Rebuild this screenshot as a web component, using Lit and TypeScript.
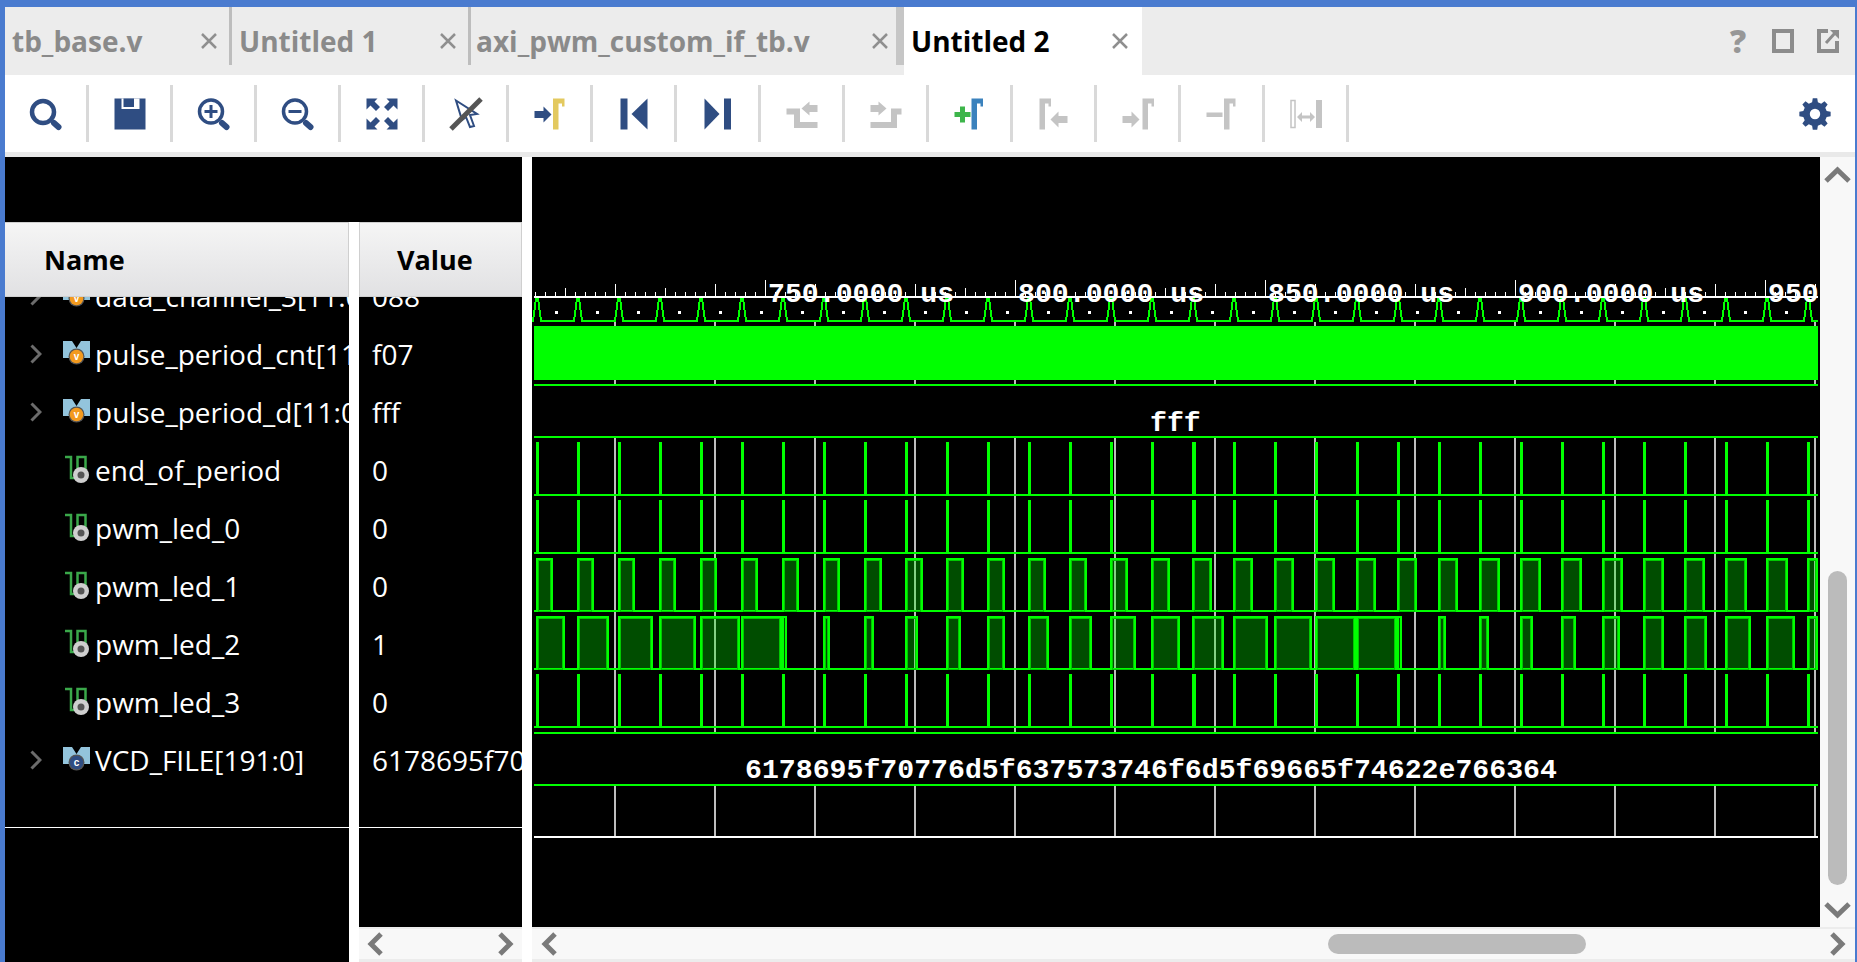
import { LitElement, html, css, svg } from "lit";
import { customElement } from "lit/decorators.js";

const NAVY = "#2f4d82";
const GRAY = "#c4c4c4";

const gamma = (x: number, c: string) =>
  svg`<path fill=${c} d="M${x},-15.5h11.5v8h-2.5v-3h-3.5v26h-5.5z"/>`;
const arrowR = (x: number, y: number, c: string) =>
  svg`<path fill=${c} d="M${x},${y - 3.5}h9v-4.5l8,8l-8,8v-4.5h-9z"/>`;
const arrowL = (x: number, y: number, c: string) =>
  svg`<path fill=${c} d="M${x},${y - 3.5}h-9v-4.5l-8,8l8,8v-4.5h9z"/>`;
const lens = (cx: number, cy: number, r: number, w: number, inner: unknown = null) => svg`
  <circle cx=${cx} cy=${cy} r=${r} fill="none" stroke=${NAVY} stroke-width=${w}/>
  ${inner}
  <path d="M8,9L12.5,13" stroke=${NAVY} stroke-width="6" stroke-linecap="round"/>`;
const corner = svg`<path fill=${NAVY} d="M-15.5,-15.5h11l-3,3l5.500,5.500l-4,4l-5.500,-5.500l-4,4z"/>`;

function gearPath(): string {
  const pts: string[] = [];
  const n = 8;
  for (let i = 0; i < n; i++) {
    const a = (i / n) * Math.PI * 2 - Math.PI / 2;
    const s = Math.PI / n;
    const p = (r: number, t: number) =>
      `${(r * Math.cos(t)).toFixed(2)},${(r * Math.sin(t)).toFixed(2)}`;
    pts.push(p(12, a - s * 0.62), p(15.8, a - s * 0.36), p(15.8, a + s * 0.36), p(12, a + s * 0.62));
  }
  return `M${pts.join("L")}Z M5.2,0A5.2,5.2 0 1 0 -5.2,0A5.2,5.2 0 1 0 5.2,0Z`;
}

const ICONS = [
  lens(-3, -2, 11, 4.5),
  svg`<rect x="-15.5" y="-15.5" width="31" height="31" fill=${NAVY}/>
      <rect x="-8.5" y="-15.5" width="18" height="10.500" fill="#fff"/>
      <rect x="-6.5" y="-15.5" width="10.500" height="8.500" fill=${NAVY}/>`,
  lens(-3, -2.5, 11.5, 3.5, svg`<path d="M-9.500,-2.500h13M-3,-9v13" stroke=${NAVY} stroke-width="3" fill="none"/>`),
  lens(-3, -2.5, 11.5, 3.5, svg`<path d="M-9.500,-2.500h13" stroke=${NAVY} stroke-width="3" fill="none"/>`),
  svg`${corner}<g transform="scale(-1,1)">${corner}</g><g transform="scale(1,-1)">${corner}</g><g transform="scale(-1,-1)">${corner}</g>`,
  svg`<path d="M-10,-13.500L11,0L4,1L8,12L4,13L0,3L-4,6Z" fill="#fff" stroke=${NAVY} stroke-width="2"/>
      <path d="M15,-15L-15,15" stroke="#555" stroke-width="5"/>`,
  svg`${arrowR(-15.5, 0.5, NAVY)}${gamma(3, "#e3c95f")}`,
  svg`<rect x="-13.5" y="-15.5" width="7" height="31" fill=${NAVY}/><path fill=${NAVY} d="M13.5,-15.5L-2.500,0L13.5,15.5Z"/>`,
  svg`<path fill=${NAVY} d="M-13.5,-15.5L1.500,0L-13.5,15.5Z"/><rect x="6" y="-15.5" width="7" height="31" fill=${NAVY}/>`,
  svg`<path d="M-15.5,-2.500H-5V11H15.5" fill="none" stroke=${GRAY} stroke-width="6"/>
      <path fill=${GRAY} d="M15.5,-9h-8v-3.500l-8,7l8,7v-3.500h8z"/>`,
  svg`<path d="M-15.5,11H8V-2.500H15.5" fill="none" stroke=${GRAY} stroke-width="6"/>
      <path fill=${GRAY} d="M-15.5,-9h8v-3.500l8,7l-8,7v-3.500h-8z"/>`,
  svg`<path d="M-15.5,0.500h16M-7.500,-7.500v16" stroke="#3db54a" stroke-width="5" fill="none"/>${gamma(1.5, "#3b82bd")}`,
  svg`${gamma(-14.5, GRAY)}${arrowL(13.5, 5.5, GRAY)}`,
  svg`${arrowR(-15.5, 5.5, GRAY)}${gamma(4.5, GRAY)}`,
  svg`<rect x="-15.5" y="-1.500" width="16" height="4.500" fill=${GRAY}/>${gamma(2, GRAY)}`,
  svg`<rect x="-15" y="-13.5" width="4" height="27" fill="none" stroke=${GRAY} stroke-width="1.500"/>
      <rect x="10" y="-14" width="6" height="28" fill=${GRAY}/>
      <path fill=${GRAY} d="M-9,3l5,-5v3.500h8v-3.500l5,5l-5,5v-3.500h-8v3.500z"/>`,
];

const chevron = html`<svg class="chev" viewBox="0 0 12 20"><path d="M1.500,1.500L10,10L1.500,18.500" fill="none" stroke="#6c6c6c" stroke-width="3"/></svg>`;
const busIcon = (fill: string, letter: string) => html`<svg class="ic" viewBox="0 0 27 24">
  <path fill="#93c4dc" d="M0,0H9L13.500,7L18,0H27V17H0Z"/>
  <circle cx="13.500" cy="15.500" r="8" fill="#555"/>
  <circle cx="13.500" cy="15.500" r="6.800" fill=${fill}/>
  <text class="ltr" x="13.500" y="19" text-anchor="middle">${letter}</text>
</svg>`;
const wireIcon = html`<svg class="ic wire" viewBox="0 0 27 28">
  <path d="M2,2H8V23H14.500V2H22.500V15" fill="none" stroke="#3aa84a" stroke-width="2.500"/>
  <circle cx="18" cy="20" r="8" fill="#cfcfcf"/>
  <circle cx="18" cy="20" r="3.500" fill="#555"/>
</svg>`;

type Row = { name: string; value: string; icon: unknown; exp: boolean };
const bus = busIcon("#f39a1e", "v");
const ROWS: Row[] = [
  { name: "data_channel_3[11:0]", value: "088", icon: bus, exp: true },
  { name: "pulse_period_cnt[11:0]", value: "f07", icon: bus, exp: true },
  { name: "pulse_period_d[11:0]", value: "fff", icon: bus, exp: true },
  { name: "end_of_period", value: "0", icon: wireIcon, exp: false },
  { name: "pwm_led_0", value: "0", icon: wireIcon, exp: false },
  { name: "pwm_led_1", value: "0", icon: wireIcon, exp: false },
  { name: "pwm_led_2", value: "1", icon: wireIcon, exp: false },
  { name: "pwm_led_3", value: "0", icon: wireIcon, exp: false },
  { name: "VCD_FILE[191:0]", value: "6178695f70776d5f637573746f6d5f69665f74622e766364", icon: busIcon("#2f4d82", "c"), exp: true },
];

const GREEN = "#00ff00";
const L = 534, R = 1818, N = 32, P = 41;
const LED1 = [17,17,17,17,17,17,17,17,18,18,18,18,18,18,18,19,20,20,20,20,20,20,20,21,21,21,21,21,21,22,22,22];
const LED2 = [29,32,35,37,40,41,5,7,10,13,15,18,21,23,26,29,32,35,38,41,41,5,8,10,13,15,18,21,23,26,29,32];

function impulses(top: number, base: number) {
  const out: unknown[] = [];
  for (let k = 0; k < N; k++) {
    const x = 536 + P * k;
    out.push(svg`<rect x=${x} y=${top} width=${k === 16 ? 4 : 3} height=${base - top} fill=${GREEN}/>`);
  }
  out.push(svg`<rect x=${L} y=${base} width=${R - L} height="2" fill=${GREEN}/>`);
  return out;
}

function pulses(top: number, base: number, widths: number[]) {
  const out: unknown[] = [svg`<rect x=${L} y=${base} width=${R - L} height="2" fill=${GREEN}/>`];
  widths.forEach((w0, k) => {
    const x = 536 + P * k;
    const w = Math.min(w0, R - x);
    const h = base - top;
    out.push(svg`<rect x=${x} y=${top} width=${w} height=${h + 1} fill="rgba(0,255,0,.3)"/>`);
    if (w > 6) {
      out.push(svg`<path d="M${x + 2.5},${base + 1.5}V${top + 2.5}H${x + w - 2.5}V${base + 1.5}Z" fill="none" stroke="#00c800" stroke-width="1"/>`);
    }
    out.push(svg`<path d="M${x + 1},${base}V${top + 1}H${x + w - 1}V${base}" fill="none" stroke=${GREEN} stroke-width="2"/>`);
  });
  return out;
}

function ruler() {
  const out: unknown[] = [svg`<rect x=${L} y="296" width=${R - L} height="2" fill="#fff"/>`];
  for (let x = 535; x < R; x += 10) {
    let top = 292;
    if ((x - 15) % 50 === 0) top = 288;
    if ((x - 15) % 100 === 0) top = 284;
    if ((x - 15) % 250 === 0) top = 280;
    out.push(svg`<rect x=${x} y=${top} width="1" height=${296 - top} fill="#fff"/>`);
  }
  return out;
}

function clock() {
  let d = `M532,321`;
  const dots: unknown[] = [];
  for (let k = 0; k < N; k++) {
    const p = 537 + P * k;
    d += `H${p - 4}L${p - 1},298.5H${p + 1}L${p + 4},321`;
    if (p + 19 < R) dots.push(svg`<rect x=${p + 18} y="310.500" width="3" height="3" fill="#fff"/>`);
  }
  d += `H${R}`;
  return svg`<path d=${d} fill="none" stroke=${GREEN} stroke-width="2"/>${dots}`;
}

function grid() {
  const out: unknown[] = [];
  for (let x = 614; x < R; x += 100) {
    for (const [a, b] of [[322, 326], [380, 384], [438, 732], [786, 836]]) {
      out.push(svg`<rect x=${x} y=${a} width="2" height=${b - a} fill="#bdbdbd"/>`);
    }
  }
  return out;
}

@customElement("app-root")
export class AppRoot extends LitElement {
  static styles = css`
    :host {
      display: flex;
      flex-direction: column;
      box-sizing: border-box;
      width: 1857px;
      height: 962px;
      overflow: hidden;
      background: #fff;
      border-top: 7px solid #4a7bcf;
      border-left: 5px solid #4a7bcf;
      border-right: 2px solid #4a7bcf;
      font-family: "Open Sans", "Noto Sans", sans-serif;
    }
    .tabs { display: flex; height: 68px; background: #ececec; flex: none; }
    .tab {
      display: flex; align-items: center; box-sizing: border-box;
      padding: 0 11px 0 7px; height: 68px;
      font-size: 28px; font-weight: 700; color: #8a8a8a;
      white-space: nowrap;
    }
    .tab.active { background: #fff; color: #000; }
    .t1 { width: 224px; }
    .t2 { width: 236px; }
    .t3 { width: 425px; padding: 0 7px 0 5px; }
    .t4 { width: 238px; padding-right: 13px; }
    .x { margin-left: auto; width: 18px; height: 18px; flex: none; }
    .tsep { width: 3px; height: 58px; background: #bdbdbd; flex: none; }
    .tsep.wide { width: 8px; background: #c6c6c6; }
    .winbtns { margin-left: auto; display: flex; align-items: center; gap: 23px; padding: 0 16px 0 0; height: 68px; }
    .winbtns svg { width: 22px; height: 24px; display: block; }
    .q { font-family: "Open Sans", sans-serif; font-weight: 800; font-size: 32px; color: #979797; width: 22px; text-align: center; line-height: 24px; }

    .toolbar { display: flex; height: 77px; flex: none; border-bottom: 5px solid #e9e9e9; box-sizing: content-box; align-items: center; }
    .cell { width: 81px; height: 57px; border-right: 3px solid #d9d9d9; display: flex; align-items: center; justify-content: center; flex: none; }
    .cell svg { width: 40px; height: 40px; display: block; }
    .gear { margin-left: auto; margin-right: 20px; width: 40px; height: 40px; display: block; }

    .main { flex: 1; display: flex; min-height: 0; }
    .left { width: 517px; display: flex; flex-direction: column; flex: none; }
    .lefttop { height: 65px; background: #000; flex: none; }
    .cols { flex: 1; display: flex; gap: 10px; min-height: 0; }
    .ncol { width: 344px; background: #000; flex: none; display: flex; flex-direction: column; }
    .vcol { width: 163px; background: #000; flex: none; display: flex; flex-direction: column; }
    .head {
      height: 75px; box-sizing: border-box; flex: none;
      background: linear-gradient(#f5f5f5, #e1e1e3);
      border: 1px solid #cfcfcf; border-left: 0;
      display: flex; align-items: center;
      font-size: 27px; font-weight: 700; color: #000;
    }
    .ncol .head { padding-left: 39px; }
    .vcol .head { padding-left: 37px; border-left: 1px solid #cfcfcf; }
    .list { height: 530px; overflow: hidden; border-bottom: 1px solid #fff; flex: none; }
    .inner { margin-top: -29px; }
    .row {
      height: 58px; display: flex; align-items: center; white-space: nowrap;
      color: #fff; font-size: 28px; overflow: hidden; box-sizing: border-box; padding-bottom: 2px;
    }
    .ncol .row { padding-left: 25px; }
    .vcol .row { padding-left: 13px; }
    .chev { width: 12px; height: 20px; flex: none; margin-right: 21px; }
    .nochev { width: 33px; flex: none; }
    .ic { width: 27px; height: 24px; flex: none; margin-right: 5px; margin-bottom: 2px; overflow: visible; }
    .ic.wire { height: 28px; }
    .ltr { font-family: "Liberation Sans", sans-serif; font-size: 10px; font-weight: 700; fill: #fff; }
    .vfill { flex: 1; }

    .hbar {
      height: 35px; box-sizing: border-box; flex: none; background: #f8f8f8;
      border-top: 2px solid #ececec; border-bottom: 3px solid #ececec;
      display: flex; align-items: center; justify-content: space-between;
      padding: 0 8px;
    }
    .hbar svg.ch { width: 17px; height: 24px; display: block; flex: none; }

    .gap { width: 10px; flex: none; }
    .right { flex: 1; display: flex; flex-direction: column; min-width: 0; }
    .rtop { flex: 1; display: flex; min-height: 0; }
    .waves { width: 1288px; height: 770px; background: #000; display: block; flex: none; }
    .waves text { font-family: "Liberation Mono", monospace; font-weight: 700; font-size: 28.2px; fill: #fff; white-space: pre; }
    .vbar { flex: 1; background: #f8f8f8; display: flex; flex-direction: column; align-items: center; padding: 9px 0 8px; box-sizing: border-box; }
    .vbar svg { width: 27px; height: 18px; display: block; flex: none; }
    .vthumb { width: 19px; height: 314px; background: #bbb; border-radius: 10px; margin: auto 0 16px; }
    .hbar.wide { padding: 0 9px 0 9px; }
    .hthumb { width: 258px; height: 20px; background: #bbb; border-radius: 10px; margin-left: 770px; margin-right: auto; }
  `;

  render() {
    const chL = html`<svg class="ch" viewBox="0 0 17 24"><path d="M14,2L4,12L14,22" fill="none" stroke="#7a7a7a" stroke-width="5"/></svg>`;
    const chR = html`<svg class="ch" viewBox="0 0 17 24"><path d="M3,2L13,12L3,22" fill="none" stroke="#7a7a7a" stroke-width="5"/></svg>`;
    const close = html`<svg class="x" viewBox="0 0 18 18"><path d="M2,2L16,16M16,2L2,16" stroke="#8f8f8f" stroke-width="2.500"/></svg>`;
    return html`
      <div class="tabs">
        <div class="tab t1">tb_base.v${close}</div><div class="tsep"></div>
        <div class="tab t2">Untitled 1${close}</div><div class="tsep"></div>
        <div class="tab t3">axi_pwm_custom_if_tb.v${close}</div><div class="tsep wide"></div>
        <div class="tab t4 active">Untitled 2${close}</div>
        <div class="winbtns">
          <div class="q">?</div>
          <svg viewBox="0 0 22 24"><rect x="2" y="2" width="18" height="20" fill="none" stroke="#8c8c8c" stroke-width="4"/></svg>
          <svg viewBox="0 0 22 24"><path d="M11,2H2V22H20V12" fill="none" stroke="#8c8c8c" stroke-width="4"/><path d="M9,14L18,4" stroke="#8c8c8c" stroke-width="3"/><path d="M13,1H22V10Z" fill="#8c8c8c"/></svg>
        </div>
      </div>

      <div class="toolbar">
        ${ICONS.map((i) => html`<div class="cell"><svg viewBox="-20 -20 40 40">${i}</svg></div>`)}
        <svg class="gear" viewBox="-20 -20 40 40"><path fill=${NAVY} fill-rule="evenodd" d=${gearPath()}/></svg>
      </div>

      <div class="main">
        <div class="left">
          <div class="lefttop"></div>
          <div class="cols">
            <div class="ncol">
              <div class="head">Name</div>
              <div class="list"><div class="inner">
                ${ROWS.map((r) => html`<div class="row">${r.exp ? chevron : html`<span class="nochev"></span>`}${r.icon}<span>${r.name}</span></div>`)}
              </div></div>
            </div>
            <div class="vcol">
              <div class="head">Value</div>
              <div class="list"><div class="inner">
                ${ROWS.map((r) => html`<div class="row"><span>${r.value}</span></div>`)}
              </div></div>
              <div class="vfill"></div>
              <div class="hbar">${chL}${chR}</div>
            </div>
          </div>
        </div>
        <div class="gap"></div>
        <div class="right">
          <div class="rtop">
            <svg class="waves" viewBox="532 157 1288 770" shape-rendering="crispEdges">
              <defs><clipPath id="cl"><rect x=${L} y="260" width=${R - L} height="60"/></clipPath></defs>
              ${grid()}
              ${ruler()}
              ${clock()}
              <rect x=${L} y="326" width=${R - L} height="54" fill=${GREEN}/>
              <rect x=${L} y="384" width=${R - L} height="2" fill=${GREEN}/>
              <rect x=${L} y="436" width=${R - L} height="2" fill=${GREEN}/>
              <text x="1150" y="431">fff</text>
              ${impulses(442, 494)}
              ${impulses(500, 552)}
              ${pulses(558, 610, LED1)}
              ${pulses(616, 668, LED2)}
              ${impulses(674, 726)}
              <rect x=${L} y="732" width=${R - L} height="2" fill=${GREEN}/>
              <text x="745" y="778">6178695f70776d5f637573746f6d5f69665f74622e766364</text>
              <rect x=${L} y="784" width=${R - L} height="2" fill=${GREEN}/>
              <rect x=${L} y="836" width=${R - L} height="2" fill="#fff"/>
              <g clip-path="url(#cl)">
                <text x="768" y="302">750.0000 us</text>
                <text x="1018" y="302">800.0000 us</text>
                <text x="1268" y="302">850.0000 us</text>
                <text x="1518" y="302">900.0000 us</text>
                <text x="1768" y="302">950.0000 us</text>
              </g>
            </svg>
            <div class="vbar">
              <svg viewBox="0 0 27 18"><path d="M2,15L13.500,4L25,15" fill="none" stroke="#7a7a7a" stroke-width="5"/></svg>
              <div class="vthumb"></div>
              <svg viewBox="0 0 27 18"><path d="M2,3L13.500,14L25,3" fill="none" stroke="#7a7a7a" stroke-width="5"/></svg>
            </div>
          </div>
          <div class="hbar wide">${chL}<div class="hthumb"></div>${chR}</div>
        </div>
      </div>
    `;
  }
}
